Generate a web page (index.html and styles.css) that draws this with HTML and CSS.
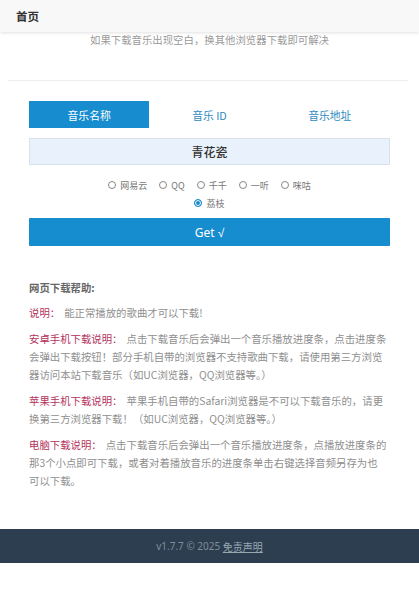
FILE: index.html
```html
<!DOCTYPE html>
<html lang="zh-CN">
<head>
<meta charset="utf-8">
<title>首页</title>
<link rel="stylesheet" href="styles.css">
</head>
<body>
<header class="topbar"><span class="topbar-title">首页</span></header>
<p class="notice">如果下载音乐出现空白，换其他浏览器下载即可解决</p>
<div class="divider"></div>
<main class="main">
  <nav class="tabs">
    <span class="tab tab-active">音乐名称</span>
    <span class="tab">音乐 ID</span>
    <span class="tab">音乐地址</span>
  </nav>
  <div class="search">青花瓷</div>
  <div class="sources">
    <label class="source"><span class="radio"></span>网易云</label>
    <label class="source"><span class="radio"></span>QQ</label>
    <label class="source"><span class="radio"></span>千千</label>
    <label class="source"><span class="radio"></span>一听</label>
    <label class="source"><span class="radio"></span>咪咕</label>
    <label class="source"><span class="radio radio-on"></span>荔枝</label>
  </div>
  <button class="get" type="button">Get √</button>
  <section class="help">
    <h3 class="help-title">网页下载帮助:</h3>
    <p class="help-item"><span class="label">说明：</span>能正常播放的歌曲才可以下载!</p>
    <p class="help-item"><span class="label">安卓手机下载说明：</span>点击下载音乐后会弹出一个音乐播放进度条，点击进度条会弹出下载按钮！部分手机自带的浏览器不支持歌曲下载，请使用第三方浏览器访问本站下载音乐（如UC浏览器，QQ浏览器等。）</p>
    <p class="help-item"><span class="label">苹果手机下载说明：</span>苹果手机自带的Safari浏览器是不可以下载音乐的，请更换第三方浏览器下载！（如UC浏览器，QQ浏览器等。）</p>
    <p class="help-item"><span class="label">电脑下载说明：</span>点击下载音乐后会弹出一个音乐播放进度条，点播放进度条的那3个小点即可下载，或者对着播放音乐的进度条单击右键选择音频另存为也可以下载。</p>
  </section>
</main>
<footer class="footer">v1.7.7 © 2025 <a class="footer-link" href="#">免责声明</a></footer>
</body>
</html>
```
FILE: styles.css
```css
html, body {
  margin: 0;
  padding: 0;
  background: #ffffff;
}
body {
  font-family: "Noto Sans CJK SC", "Noto Sans", sans-serif;
  color: #333;
}
.topbar {
  height: 32px;
  display: flex;
  align-items: center;
  padding-left: 16px;
  background: #f8f8f8;
  box-shadow: 0 1px 3px rgba(0, 0, 0, 0.12);
  position: relative;
}
.topbar-title {
  font-size: 11.5px;
  font-weight: 700;
  color: #333;
}
.notice {
  margin: 0;
  padding-top: 1px;
  line-height: 14px;
  font-size: 10.4px;
  color: #9a9a9a;
  text-align: center;
}
.divider {
  height: 1px;
  background: #eeeeee;
  margin: 33px 11px 0 8px;
}
.main {
  padding: 0 29px;
}
.tabs {
  margin-top: 20px;
  display: grid;
  grid-template-columns: repeat(3, 1fr);
  height: 27px;
}
.tab {
  display: flex;
  align-items: center;
  justify-content: center;
  font-size: 10.8px;
  color: #2f8bbf;
}
.tab-active {
  background: #178dd0;
  color: #fff;
}
.search {
  margin-top: 10px;
  height: 25px;
  border: 1px solid #d8e2ec;
  background: #e9f2fc;
  display: flex;
  align-items: center;
  justify-content: center;
  font-size: 12px;
  font-weight: 500;
  color: #333;
}
.sources {
  margin: 11px auto 0;
  width: 220px;
  display: flex;
  flex-wrap: wrap;
  justify-content: center;
  column-gap: 12px;
}
.source {
  display: flex;
  align-items: center;
  height: 18px;
  font-size: 9px;
  color: #777;
}
.radio {
  width: 6px;
  height: 6px;
  border: 1px solid #888;
  border-radius: 50%;
  margin-right: 4px;
  background: #fff;
}
.radio-on {
  border-color: #1a8ad0;
  background: #1a8ad0;
  box-shadow: inset 0 0 0 1px #fff;
}
.get {
  display: block;
  width: 100%;
  margin-top: 6px;
  height: 28px;
  border: 0;
  border-radius: 1px;
  background: #168dce;
  color: #fff;
  font-family: "Noto Sans", sans-serif;
  font-size: 12px;
  padding: 0;
}
.help {
  margin-top: 33px;
  width: 358px;
}
.help-title {
  margin: 0;
  line-height: 18px;
  font-size: 10.4px;
  font-weight: 700;
  color: #666;
}
.help-item {
  margin: 7px 0 0;
  line-height: 18px;
  font-size: 10.4px;
  color: #8f8f8f;
}
.help-item + .help-item {
  margin-top: 8px;
}
.label {
  color: #b4325c;
  margin-right: 4px;
}
.footer {
  margin-top: 39px;
  height: 34px;
  background: #2c3e50;
  display: flex;
  align-items: center;
  justify-content: center;
  font-family: "Noto Sans", "Noto Sans CJK SC", sans-serif;
  font-size: 10px;
  color: #7f8e9b;
  white-space: pre;
}
.footer-link {
  color: #9aa8b4;
  text-decoration: underline;
}
```
